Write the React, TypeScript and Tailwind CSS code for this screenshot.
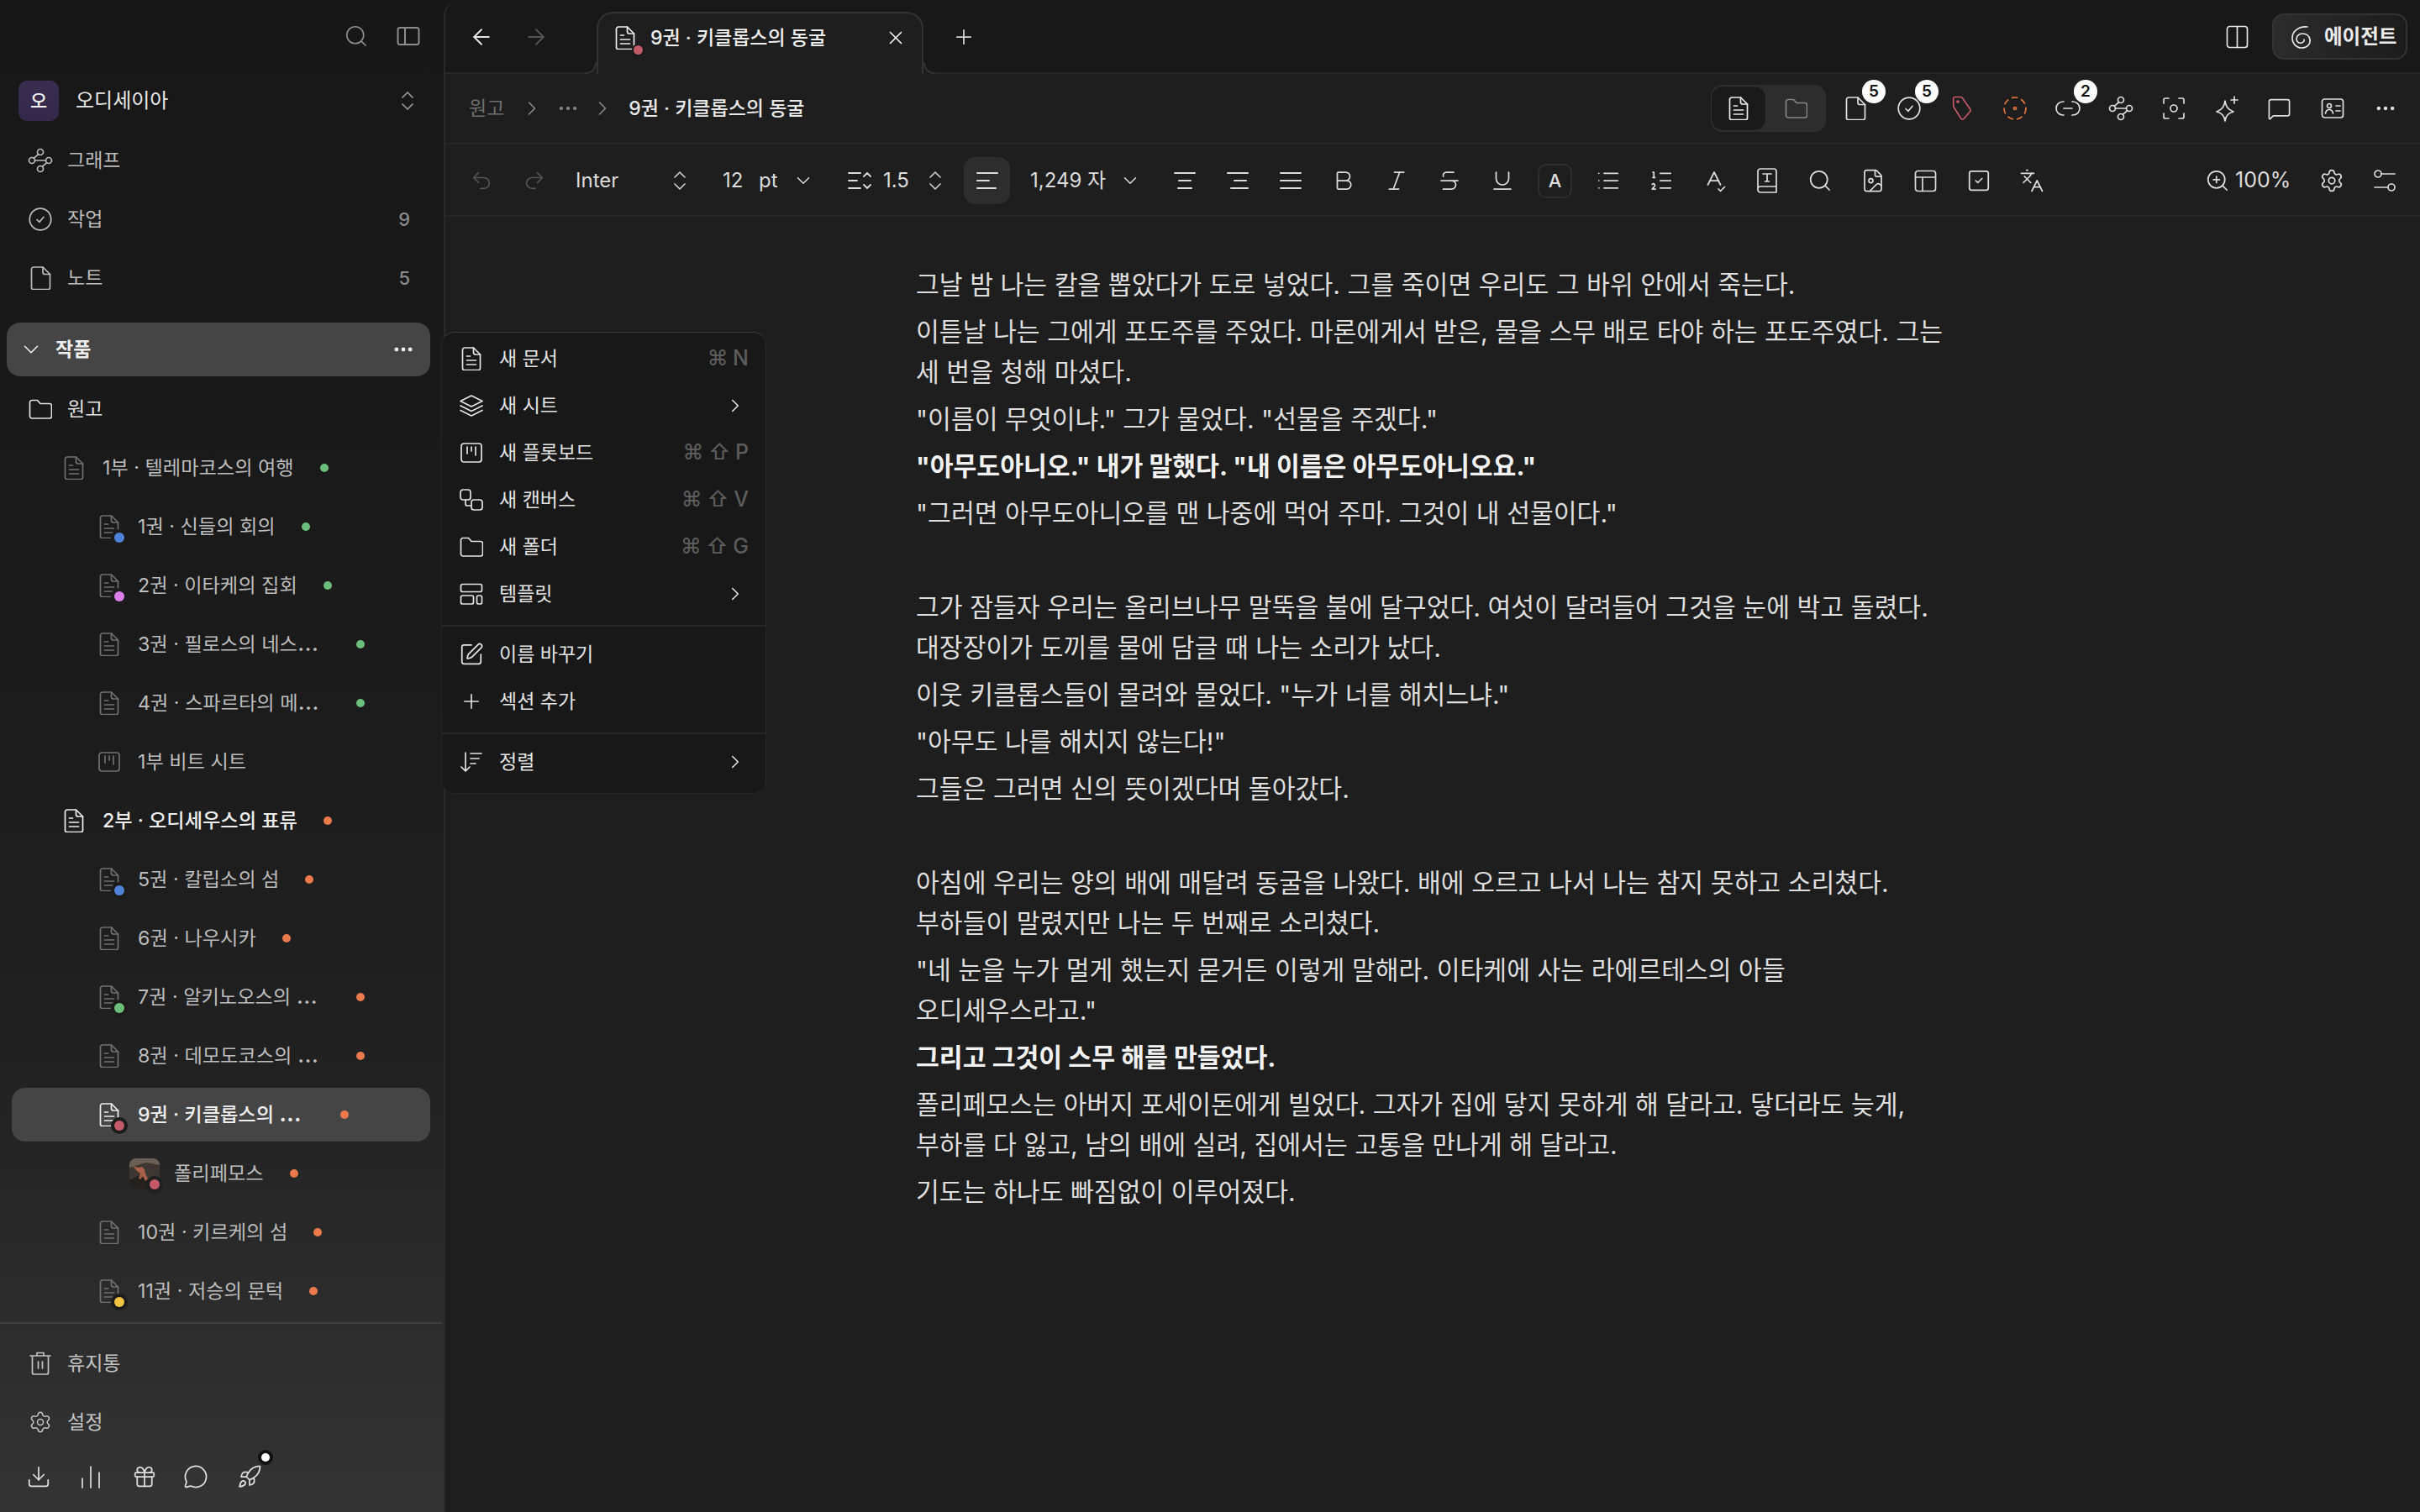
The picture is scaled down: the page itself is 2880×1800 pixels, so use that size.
import React from "react";
import { Search, X, Plus, ArrowLeft, ArrowRight, Undo2, Redo2, ChevronDown, ChevronRight, MoreHorizontal, SquarePen, Settings, Download, Gift, MessageCircle, Rocket, Bold, Italic, Strikethrough, Underline, List, ListOrdered, SpellCheck, FileImage, SquareCheck, Languages, ZoomIn, MessageSquare } from "lucide-react";

const S = ({ w, h, sw = 1.7, className = "", children }: { w: number; h: number; sw?: number; className?: string; children?: React.ReactNode }) => (
  <svg width={w} height={h} viewBox={`0 0 ${w} ${h}`} fill="none" stroke="currentColor" strokeWidth={sw} strokeLinecap="round" strokeLinejoin="round" className={`shrink-0 ${className}`}>{children}</svg>
);

const DocIcon = ({ className = "" }: { className?: string }) => (
  <S w={24} h={28} className={className}>
    <path d="M1.5 3.5a2.5 2.5 0 0 1 2.5-2.5h10.5l8 8v16.5a2 2 0 0 1-2 2H3.5a2 2 0 0 1-2-2z" />
    <path d="M14.5 1v5.500a2.500 2.500 0 0 0 2.500 2.500h5.500M6.500 11h4M6.500 16h11M6.500 21h11" />
  </S>
);
const FileBlank = ({ className = "" }: { className?: string }) => (
  <S w={25} h={28} className={className}>
    <path d="M1.500 3.500a2.500 2.500 0 0 1 2.500-2.500h11l8.500 8.500v16a2 2 0 0 1-2 2H3.500a2 2 0 0 1-2-2z" />
    <path d="M15 1v6a2.500 2.500 0 0 0 2.500 2.500h6" />
  </S>
);
const FolderIcon = ({ className = "", size = 28 }: { className?: string; size?: number }) => (
  <S w={size} h={25} className={className}>
    <path d={`M1.500 4a2.500 2.500 0 0 1 2.500-2.500h6.500l3.500 4h${size - 17}a2.500 2.500 0 0 1 2.500 2.500v12.500a2.500 2.500 0 0 1-2.500 2.500H4a2.500 2.500 0 0 1-2.500-2.500z`} />
  </S>
);
const GraphIcon = ({ className = "" }: { className?: string }) => (
  <S w={30} h={30} className={className}>
    <circle cx="15" cy="5" r="3.500" /><circle cx="5" cy="15" r="3.500" /><circle cx="25" cy="15" r="3.500" /><circle cx="15" cy="25" r="3.500" />
    <path d="M8.500 15h13M12.700 7.700 7.300 12.300M22.700 17.700l-5.400 4.600" />
  </S>
);
const CircleChk = ({ className = "" }: { className?: string }) => (
  <S w={28} h={28} className={className}>
    <circle cx="14" cy="14" r="12.800" /><path d="m10 14.500 3 2.800 5-6" />
  </S>
);
const Board = ({ className = "" }: { className?: string }) => (
  <S w={26} h={24} className={className}>
    <rect x="1" y="1" width="24" height="22" rx="3" /><path d="M8 5v8M13 5v5M18 5v10" />
  </S>
);
const UpDown = ({ className = "" }: { className?: string }) => (
  <S w={18} h={26} className={className}><path d="m3 9 6-6 6 6M3 17l6 6 6-6" /></S>
);
const Lines = ({ kind }: { kind: "l" | "c" | "r" | "j" }) => (
  <S w={28} h={24} sw={2}>
    <path d="M2 3h24" />
    <path d={kind === "l" ? "M2 12h14" : kind === "c" ? "M7 12h14" : kind === "r" ? "M10 12h14" : "M2 12h24"} />
    <path d={kind === "l" ? "M2 21h22" : kind === "c" ? "M6 21h16" : kind === "r" ? "M6 21h20" : "M2 21h24"} />
  </S>
);
const Dot = ({ color, ring = "ring-[#1c1c1c]" }: { color: string; ring?: string }) => (
  <span className={`absolute right-[-4px] bottom-[-5px] w-3 h-3 rounded-full ring-4 ${ring} ${color}`} />
);

const Row = ({ icon, label, count, className = "" }: { icon: React.ReactNode; label: string; count?: string; className?: string }) => (
  <div className={`h-[70px] flex items-center pl-[34px] pr-[40px] ${className}`}>
    <span className="w-[28px] flex justify-center">{icon}</span>
    <span className="ml-[18px] text-[23px] flex-1">{label}</span>
    {count && <span className="text-[22px] text-[#8a8a8a] font-medium">{count}</span>}
  </div>
);

type It = { t: string; lvl: 1 | 2 | 3; board?: boolean; badge?: string; dot?: string; strong?: boolean; active?: boolean; w?: number };
const GREEN = "bg-[#6cbf7a]";
const ORANGE = "bg-[#ea7a4c]";
const items: It[] = [
  { t: "1부 · 텔레마코스의 여행", lvl: 1, dot: GREEN },
  { t: "1권 · 신들의 회의", lvl: 2, badge: "bg-[#4f83d8]", dot: GREEN },
  { t: "2권 · 이타케의 집회", lvl: 2, badge: "bg-[#dc7fe8]", dot: GREEN },
  { t: "3권 · 필로스의 네스…", lvl: 2, dot: GREEN, w: 229 },
  { t: "4권 · 스파르타의 메…", lvl: 2, dot: GREEN, w: 229 },
  { t: "1부 비트 시트", lvl: 2, board: true },
  { t: "2부 · 오디세우스의 표류", lvl: 1, dot: ORANGE, strong: true },
  { t: "5권 · 칼립소의 섬", lvl: 2, badge: "bg-[#4f83d8]", dot: ORANGE },
  { t: "6권 · 나우시카", lvl: 2, dot: ORANGE },
  { t: "7권 · 알키노오스의 …", lvl: 2, badge: "bg-[#6cbf7a]", dot: ORANGE, w: 229 },
  { t: "8권 · 데모도코스의 …", lvl: 2, dot: ORANGE, w: 229 },
  { t: "9권 · 키클롭스의 …", lvl: 2, badge: "bg-[#c25a68]", dot: ORANGE, active: true, strong: true, w: 210 },
  { t: "폴리페모스", lvl: 3, dot: ORANGE },
  { t: "10권 · 키르케의 섬", lvl: 2, dot: ORANGE },
  { t: "11권 · 저승의 문턱", lvl: 2, badge: "bg-[#f4c542]", dot: ORANGE },
];

const Thumb = () => (
  <span className="relative w-[36px] h-[36px] shrink-0">
    <svg width="36" height="36" viewBox="0 0 36 36" className="rounded-[8px]">
      <rect width="36" height="36" fill="#3d3631" />
      <path d="M0 26 12 20l12 8 12-4v12H0z" fill="#25211f" />
      <path d="M0 0h36v8L20 5 0 11z" fill="#6a5f55" />
      <path d="M4 9l7 2 4-1 3 3 1 5 3 6-3 3-3-6-3 4-2-1 2-6-4-3z" fill="#a8604a" />
    </svg>
    <span className="absolute right-0 bottom-[-1px] w-3 h-3 rounded-full ring-4 ring-[#1f1f1f] bg-[#c25a68]" />
  </span>
);

const Title = ({ t }: { t: string }) =>
  t.endsWith("…") ? <>{t.slice(0, -1)}<span className="text-[29px] leading-none">…</span></> : <>{t}</>;

const TreeRow = ({ it }: { it: It }) => {
  const pl = it.lvl === 1 ? 60 : it.lvl === 2 ? 102 : 140;
  const col = it.active || it.strong ? "text-[#eeeeee] font-medium" : "text-[#bdbdbd]";
  return (
    <div className="h-[70px] flex items-center">
      <div style={{ paddingLeft: pl }} className={`ml-[14px] w-[498px] h-16 rounded-[16px] flex items-center ${it.active ? "bg-[#454545]" : ""}`}>
        {it.lvl === 3 ? <Thumb /> : (
          <span className={`relative w-[28px] flex justify-center ${it.active || it.strong ? "text-[#efefef]" : "text-[#707070]"}`}>
            {it.board ? <Board /> : <DocIcon />}
            {it.badge && <Dot color={it.badge} />}
          </span>
        )}
        <span style={it.w ? { width: it.w } : undefined} className={`${it.lvl === 3 ? "ml-[17px]" : "ml-[20px]"} text-[23.2px] whitespace-nowrap ${col}`}><Title t={it.t} /></span>
        {it.dot && <span className={`ml-[31px] w-[10px] h-[10px] rounded-full ${it.dot}`} />}
      </div>
    </div>
  );
};

const Sidebar = () => (
  <aside className="w-[528px] shrink-0 h-screen flex flex-col bg-[linear-gradient(180deg,#171717_0%,#1b1b1b_45%,#212121_70%,#343434_100%)]">
    <div className="h-[96px] flex items-start pt-[28px] pr-[28px] justify-end gap-[33px] text-[#8c8c8c]">
      <Search size={30} strokeWidth={1.3} />
      <S w={28} h={30}><rect x="1.500" y="5" width="25" height="20" rx="2.500" strokeWidth="2" /><path d="M10 5v20" strokeWidth="2" /></S>
    </div>
    <div className="h-12 flex items-center pl-[22px] pr-[34px]">
      <span className="w-12 h-12 rounded-[10px] bg-[linear-gradient(180deg,#3a2e50,#33284a)] flex items-center justify-center text-[22px] font-medium text-[#efefef]">오</span>
      <span className="ml-[20px] flex-1 text-[24px] text-[#e8e8e8]">오디세이아</span>
      <UpDown className="text-[#9a9a9a]" />
    </div>
    <div className="pt-[12px] text-[#bcbcbc]">
      <Row icon={<GraphIcon />} label="그래프" />
      <Row icon={<CircleChk />} label="작업" count="9" />
      <Row icon={<FileBlank />} label="노트" count="5" />
    </div>
    <div className="mt-[18px] ml-[8px] w-[504px] h-16 rounded-[16px] bg-[#454545] flex items-center pl-[14px] pr-[18px] text-[#eeeeee]">
      <ChevronDown size={30} strokeWidth={1.3} />
      <span className="ml-[14px] flex-1 text-[23px] font-semibold">작품</span>
      <MoreHorizontal size={28} strokeWidth={2.2} />
    </div>
    <div className="pt-[4px]">
      <Row icon={<FolderIcon />} label="원고" className="text-[#e2e2e2]" />
      {items.map((it) => <TreeRow key={it.t} it={it} />)}
    </div>
    <div className="mt-[2px] mr-[2px] border-t-2 border-[#3e3e3e] pt-[12px] text-[#c4c4c4]">
      <Row icon={<S w={26} h={30}><path d="M1 6h24M9 6V2.500h8V6M3.500 6v20a2 2 0 0 0 2 2h15a2 2 0 0 0 2-2V6M10.500 13v8M15.500 13v8" /></S>} label="휴지통" />
      <Row icon={<Settings size={30} strokeWidth={1.3} />} label="설정" />
      <div className="h-[60px] flex items-center pl-[31px] text-[#dedede]">
        <span className="w-[65px]"><Download size={30} strokeWidth={1.4} /></span>
        <span className="w-[61px]"><S w={26} h={30}><path d="M2 17v11M12 3v25M22 10v18" /></S></span>
        <span className="w-[61px]"><Gift size={30} strokeWidth={1.4} /></span>
        <span className="w-[64px]"><MessageCircle size={30} strokeWidth={1.4} /></span>
        <span className="relative"><Rocket size={30} strokeWidth={1.4} /><span className="absolute right-[-9px] top-[-13px] w-[10px] h-[10px] rounded-full bg-white ring-4 ring-[#111111]" /></span>
      </div>
    </div>
  </aside>
);

const Badge = ({ n }: { n: string }) => (
  <span className="absolute left-[39px] top-[-19px] w-[28px] h-[28px] rounded-full bg-white text-[#111111] text-[19px] font-semibold flex items-center justify-center">{n}</span>
);
const Cell = ({ children, badge }: { children: React.ReactNode; badge?: string }) => (
  <span className="relative w-[63px] h-[30px] flex items-center justify-center shrink-0">{children}{badge && <Badge n={badge} />}</span>
);

const TabBar = () => (
  <div className="h-[87px] shrink-0 bg-[#181818] border-b-2 border-[#272727] flex items-end rounded-tl-[18px] relative">
    <div className="h-[85px] flex items-center pl-[13px] text-[#e6e6e6]">
      <span className="w-[60px] flex justify-center"><ArrowLeft size={30} strokeWidth={1.5} /></span>
      <span className="w-[70px] flex justify-center text-[#555555]"><ArrowRight size={30} strokeWidth={1.5} /></span>
    </div>
    <div className="relative ml-[37px] mb-[-2px] w-[389px] h-[74px] bg-[#1e1e1e] border-2 border-b-0 border-[#333333] rounded-t-[20px] flex items-start pl-[20px] pt-[15px] text-[#eeeeee]">
      <span className="relative"><DocIcon /><span className="absolute right-[-9px] bottom-[-6px] w-[11px] h-[11px] rounded-full bg-[#c25a68] ring-2 ring-[#1a1a1a]" /></span>
      <span className="ml-[18px] text-[23px] leading-[28px] font-medium whitespace-nowrap">9권 · 키클롭스의 동굴</span>
      <X size={26} strokeWidth={1.6} className="absolute left-[341px] top-[16px]" />
      <svg className="absolute left-[-16px] bottom-0" width="14" height="14" viewBox="0 0 14 14" fill="none"><path d="M14 0v14H0c8 0 14-6 14-14z" fill="#1e1e1e" /><path d="M13 0c0 8-5 13-13 13" stroke="#333" strokeWidth="2" /></svg>
      <svg className="absolute right-[-16px] bottom-0" width="14" height="14" viewBox="0 0 14 14" fill="none"><path d="M0 0v14h14C6 14 0 8 0 0z" fill="#1e1e1e" /><path d="M1 0c0 8 5 13 13 13" stroke="#333" strokeWidth="2" /></svg>
    </div>
    <div className="h-[85px] flex items-center ml-[34px] text-[#d6d6d6]"><Plus size={28} strokeWidth={1.5} /></div>
    <div className="h-[85px] ml-auto flex items-center pr-[15px]">
      <S w={27} h={28} className="text-[#e4e4e4] mr-[28px]"><rect x="1.500" y="1.500" width="24" height="25" rx="3" /><path d="M13.500 1.500v25" /></S>
      <div className="w-[161px] h-[55px] rounded-[14px] border-2 border-[#333333] bg-[linear-gradient(100deg,#2c2c2c,#1c1c1c)] flex items-center pl-[18px] text-[#ececec]">
        <S w={28} h={30} sw={1.6}><path d="M22 3C12 2 4 8 4 16c0 7 5 12 11 12 7 0 11-5 10-10-1-5-5-7-9-7-4 0-7 3-7 6 0 4 3 6 6 5 2-.500 4-2 3-4" /></S>
        <span className="ml-[14px] text-[23.500px] font-semibold whitespace-nowrap">에이전트</span>
      </div>
    </div>
  </div>
);

const Crumbs = () => (
  <div className="h-[84px] shrink-0 border-b-2 border-[#272727] flex items-center pl-[28px] pr-[10px]">
    <span className="text-[23px] text-[#6e6e6e]">원고</span>
    <ChevronRight size={28} strokeWidth={1.4} className="ml-[19px] text-[#8a8a8a]" />
    <MoreHorizontal size={28} strokeWidth={1.6} className="ml-[15px] text-[#8a8a8a]" />
    <ChevronRight size={28} strokeWidth={1.4} className="ml-[13px] text-[#8a8a8a]" />
    <span className="ml-[17px] text-[23px] font-medium text-[#e8e8e8] whitespace-nowrap">9권 · 키클롭스의 동굴</span>
    <div className="ml-auto flex items-center">
      <div className="w-[137px] h-[56px] rounded-[14px] bg-[#2d2d2d] flex items-center mr-[4px]">
        <span className="w-[66px] h-[54px] rounded-[14px] bg-[#1a1a1a] border border-[#333333] flex items-center justify-center text-[#ececec]"><DocIcon /></span>
        <span className="flex-1 flex justify-center text-[#858585]"><FolderIcon size={27} /></span>
      </div>
      <div className="flex items-center text-[#e0e0e0]">
        <Cell badge="5"><FileBlank /></Cell>
        <Cell badge="5"><CircleChk /></Cell>
        <Cell><S w={24} h={30} className="text-[#c25a68]"><path d="M3 1.500h7a3 3 0 0 1 2.300 1l9.400 13.500a2.500 2.500 0 0 1-.300 3l-7.400 8.500a2 2 0 0 1-3 0L2.500 14a3 3 0 0 1-.800-2V3a1.500 1.500 0 0 1 1.300-1.500z" /><circle cx="7" cy="7" r="1" /></S></Cell>
        <Cell><S w={30} h={30} className="text-[#e9753c]"><circle cx="15" cy="15" r="13" strokeDasharray="6 5.500" /><circle cx="15" cy="15" r="1.500" /></S></Cell>
        <Cell badge="2"><S w={30} h={20}><path d="M10 2H9a8 8 0 0 0 0 16h1M20 2h1a8 8 0 0 1 0 16h-1M10 10h10" /></S></Cell>
        <Cell><GraphIcon /></Cell>
        <Cell><S w={28} h={28}><path d="M8 2H4a2 2 0 0 0-2 2v4M20 2h4a2 2 0 0 1 2 2v4M8 26H4a2 2 0 0 1-2-2v-4M20 26h4a2 2 0 0 0 2-2v-4" /><circle cx="14" cy="14" r="4" /></S></Cell>
        <Cell><S w={30} h={32}><path d="M13 7c1 7 3 10 10 13-7 2-9 5-10 11-1-6-3-9-10-11 7-3 9-6 10-13zM24 2v8M20 6h8" /></S></Cell>
        <Cell><MessageSquare size={29} strokeWidth={1.4} /></Cell>
        <Cell><S w={28} h={26}><rect x="1.500" y="2" width="25" height="22" rx="3" /><circle cx="10" cy="10" r="2.500" /><path d="M5.500 19c.500-3 2.500-4.500 4.500-4.500s4 1.500 4.500 4.500M18 10h5M18 16h5" /></S></Cell>
        <Cell><MoreHorizontal size={28} strokeWidth={1.8} /></Cell>
      </div>
    </div>
  </div>
);

const Toolbar = () => (
  <div className="h-[86px] shrink-0 border-b-2 border-[#272727] flex items-center pt-[2px] pl-[12px] pr-[11px] text-[#dcdcdc] text-[24px]">
    <span className="w-[62px] flex justify-center text-[#555555]"><Undo2 size={28} strokeWidth={1.4} /></span>
    <span className="w-[63px] flex justify-center text-[#555555]"><Redo2 size={28} strokeWidth={1.4} /></span>
    <span className="ml-[18px] w-[115px]">Inter</span>
    <UpDown className="text-[#cccccc]" />
    <span className="ml-[42px] w-[27px]">12</span>
    <span className="ml-[16px] w-[25px]">pt</span>
    <ChevronDown size={26} strokeWidth={1.4} className="ml-[15px]" />
    <S w={30} h={24} sw={1.8} className="ml-[39px]"><path d="M2 3h14M2 12h10M2 21h14M20 7l4-4 4 4M20 17l4 4 4-4" /></S>
    <span className="ml-[13px] w-[33px]">1.5</span>
    <UpDown className="ml-[20px] text-[#cccccc]" />
    <span className="ml-[25px] w-[55px] h-[56px] rounded-[14px] bg-[#2d2d2d] flex items-center justify-center"><Lines kind="l" /></span>
    <span className="ml-[24px] w-[90px] whitespace-nowrap">1,249 자</span>
    <ChevronDown size={26} strokeWidth={1.4} className="ml-[16px]" />
    <div className="ml-[20px] flex items-center">
      <Cell><Lines kind="c" /></Cell>
      <Cell><Lines kind="r" /></Cell>
      <Cell><Lines kind="j" /></Cell>
      <Cell><Bold size={30} strokeWidth={1.4} /></Cell>
      <Cell><Italic size={30} strokeWidth={1.4} /></Cell>
      <Cell><Strikethrough size={30} strokeWidth={1.4} /></Cell>
      <Cell><Underline size={30} strokeWidth={1.4} /></Cell>
      <Cell><span className="w-[41px] h-[41px] rounded-[10px] border-2 border-[#2d2d2d] flex items-center justify-center text-[22px] font-medium">A</span></Cell>
      <Cell><List size={30} strokeWidth={1.4} /></Cell>
      <Cell><ListOrdered size={30} strokeWidth={1.4} /></Cell>
      <Cell><SpellCheck size={30} strokeWidth={1.4} /></Cell>
      <Cell><S w={26} h={30}><path d="M2 25V4a3 3 0 0 1 3-3h16a3 3 0 0 1 3 3v25H5a3 3 0 0 1-3-3zM2 25a3 3 0 0 1 3-3h19M8 7h10M13 7v9M10.500 16h5" /></S></Cell>
      <Cell><Search size={30} strokeWidth={1.4} /></Cell>
      <Cell><FileImage size={30} strokeWidth={1.4} /></Cell>
      <Cell><S w={27} h={27}><rect x="1.500" y="1.500" width="24" height="24" rx="3" /><path d="M1.500 9h24M10 9v16.500" /></S></Cell>
      <Cell><SquareCheck size={30} strokeWidth={1.4} /></Cell>
      <Cell><Languages size={30} strokeWidth={1.4} /></Cell>
    </div>
    <div className="ml-auto flex items-center">
      <ZoomIn size={30} strokeWidth={1.4} />
      <span className="ml-[6px] w-[66px] text-[25px] whitespace-nowrap">100%</span>
      <span className="ml-[17px]"><Cell><Settings size={30} strokeWidth={1.4} /></Cell></span>
      <Cell><S w={28} h={28}><circle cx="6" cy="6" r="4" /><path d="M10 6h16" /><circle cx="22" cy="22" r="4" /><path d="M2 22h16" /></S></Cell>
    </div>
  </div>
);

const P = ({ children, b }: { children?: React.ReactNode; b?: boolean }) => (
  <p className={`mb-[8px] min-h-[48px] leading-[48px] whitespace-nowrap ${b ? "font-bold text-[#f2f2f2]" : ""}`}>{children}</p>
);

const Editor = () => (
  <div className="flex-1 pl-[560px] pt-[57px] text-[30.250px] text-[#dedede] font-normal">
    <P>그날 밤 나는 칼을 뽑았다가 도로 넣었다. 그를 죽이면 우리도 그 바위 안에서 죽는다.</P>
    <P>이튿날 나는 그에게 포도주를 주었다. 마론에게서 받은, 물을 스무 배로 타야 하는 포도주였다. 그는<br />세 번을 청해 마셨다.</P>
    <P>"이름이 무엇이냐." 그가 물었다. "선물을 주겠다."</P>
    <P b>"아무도아니오." 내가 말했다. "내 이름은 아무도아니오요."</P>
    <P>"그러면 아무도아니오를 맨 나중에 먹어 주마. 그것이 내 선물이다."</P>
    <P />
    <P>그가 잠들자 우리는 올리브나무 말뚝을 불에 달구었다. 여섯이 달려들어 그것을 눈에 박고 돌렸다.<br />대장장이가 도끼를 물에 담글 때 나는 소리가 났다.</P>
    <P>이웃 키클롭스들이 몰려와 물었다. "누가 너를 해치느냐."</P>
    <P>"아무도 나를 해치지 않는다!"</P>
    <P>그들은 그러면 신의 뜻이겠다며 돌아갔다.</P>
    <P />
    <P>아침에 우리는 양의 배에 매달려 동굴을 나왔다. 배에 오르고 나서 나는 참지 못하고 소리쳤다.<br />부하들이 말렸지만 나는 두 번째로 소리쳤다.</P>
    <P>"네 눈을 누가 멀게 했는지 묻거든 이렇게 말해라. 이타케에 사는 라에르테스의 아들<br />오디세우스라고."</P>
    <P b>그리고 그것이 스무 해를 만들었다.</P>
    <P>폴리페모스는 아버지 포세이돈에게 빌었다. 그자가 집에 닿지 못하게 해 달라고. 닿더라도 늦게,<br />부하를 다 잃고, 남의 배에 실려, 집에서는 고통을 만나게 해 달라고.</P>
    <P>기도는 하나도 빠짐없이 이루어졌다.</P>
  </div>
);

const MenuRow = ({ icon, label, keys, arrow }: { icon: React.ReactNode; label: string; keys?: string; arrow?: boolean }) => (
  <div className="h-[56px] flex items-center pl-[20px] pr-[20px] text-[#e4e4e4]">
    <span className="w-[30px] flex justify-center">{icon}</span>
    <span className="ml-[18px] flex-1 text-[23px]">{label}</span>
    {keys && <span className="text-[25px] [word-spacing:-1px] text-[#5c5c5c] font-medium whitespace-nowrap">{keys}</span>}
    {arrow && <ChevronRight size={26} strokeWidth={1.5} className="mr-[3px]" />}
  </div>
);

const Menu = () => (
  <div className="absolute left-[525px] top-[395px] w-[387px] h-[550px] bg-[#181818] rounded-[16px] border border-[#262626] border-t-[#3a3a3a] pt-[3px] z-10">
    <MenuRow icon={<DocIcon />} label="새 문서" keys="⌘ N" />
    <MenuRow icon={<S w={30} h={28}><path d="m15 2 13 6.500L15 15 2 8.500zM2 14l13 6.500L28 14M2 19.500 15 26l13-6.500" /></S>} label="새 시트" arrow />
    <MenuRow icon={<Board />} label="새 플롯보드" keys="⌘ ⇧ P" />
    <MenuRow icon={<S w={28} h={26}><rect x="1" y="1" width="12" height="12" rx="3" /><rect x="14" y="13" width="13" height="12" rx="3" /><path d="M7 13v5a2 2 0 0 0 2 2h5" /></S>} label="새 캔버스" keys="⌘ ⇧ V" />
    <MenuRow icon={<FolderIcon />} label="새 폴더" keys="⌘ ⇧ G" />
    <MenuRow icon={<S w={28} h={26}><rect x="1.500" y="1.500" width="25" height="9" rx="2" /><rect x="1.500" y="15" width="15" height="10" rx="2" /><rect x="20.500" y="15" width="6" height="10" rx="2" /></S>} label="템플릿" arrow />
    <div className="mt-[9px] border-t-2 border-[#282828] pt-[5px]">
      <MenuRow icon={<SquarePen size={30} strokeWidth={1.4} />} label="이름 바꾸기" />
      <MenuRow icon={<Plus size={28} strokeWidth={1.4} />} label="섹션 추가" />
    </div>
    <div className="mt-[9px] border-t-2 border-[#282828] pt-[5px]">
      <MenuRow icon={<S w={28} h={26}><path d="M7 2v22M2 19l5 5 5-5M13 3h13M13 9h10M13 15h6" /></S>} label="정렬" arrow />
    </div>
  </div>
);

export default function App() {
  return (
    <div className="relative w-[2880px] h-screen overflow-hidden flex bg-[#181818] font-['Inter','Noto_Sans_CJK_KR','DejaVu_Sans',sans-serif]">
      <Sidebar />
      <main className="flex-1 min-w-0 flex flex-col bg-[#1e1e1e] border-l-2 border-[#2a2a2a] rounded-tl-[18px] mt-[1px]">
        <TabBar />
        <Crumbs />
        <Toolbar />
        <Editor />
      </main>
      <Menu />
    </div>
  );
}
